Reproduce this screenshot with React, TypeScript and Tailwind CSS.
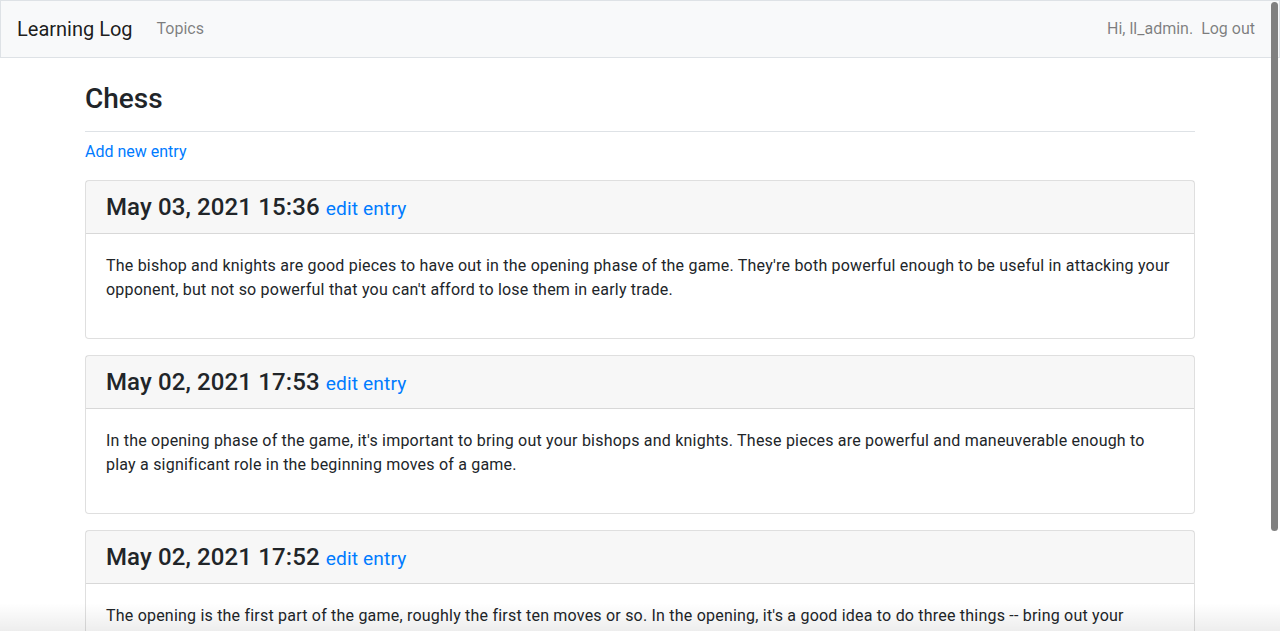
import React from 'react';

type Entry = { date: string; text: string };

const ENTRIES: Entry[] = [
  {
    date: 'May 03, 2021 15:36',
    text: "The bishop and knights are good pieces to have out in the opening phase of the game. They're both powerful enough to be useful in attacking your opponent, but not so powerful that you can't afford to lose them in early trade.",
  },
  {
    date: 'May 02, 2021 17:53',
    text: "In the opening phase of the game, it's important to bring out your bishops and knights. These pieces are powerful and maneuverable enough to play a significant role in the beginning moves of a game.",
  },
  {
    date: 'May 02, 2021 17:52',
    text: "The opening is the first part of the game, roughly the first ten moves or so. In the opening, it's a good idea to do three things -- bring out your bishops and knights, try to control the center of the board, and castle your king.",
  },
];

const EntryCard = ({ entry }: { entry: Entry }) => (
  <div className="mb-4 rounded border border-[rgba(0,0,0,0.125)] bg-white">
    <h4 className="border-b border-[rgba(0,0,0,0.125)] bg-[rgba(0,0,0,0.03)] px-5 py-3 text-[24px] font-medium leading-[28px] tracking-[0.005em] text-[#212529]">
      {entry.date}{' '}
      <small className="text-[80%] font-normal leading-none">
        <a href="#" className="text-[#007bff]">edit entry</a>
      </small>
    </h4>
    <div className="p-5">
      <p className="mb-4 tracking-[0.013em]">{entry.text}</p>
    </div>
  </div>
);

export default function App() {
  return (
    <div className="relative h-[631px] overflow-hidden bg-white font-['Roboto',sans-serif] text-[16px] leading-[1.5] text-[#212529]">
      {/* Navbar */}
      <nav className="mb-6 flex items-center border border-[#dee2e6] bg-[#f8f9fa] px-4 py-2">
        <a href="#" className="mr-4 py-[5px] text-[20px] text-[rgba(0,0,0,0.9)]">Learning Log</a>
        <a href="#" className="px-2 py-2 text-[rgba(0,0,0,0.5)]">Topics</a>
        <div className="ml-auto flex items-center">
          <span className="py-2 text-[rgba(0,0,0,0.5)]">Hi, ll_admin.</span>
          <a href="#" className="px-2 py-2 text-[rgba(0,0,0,0.5)]">Log out</a>
        </div>
      </nav>

      <main className="mx-auto w-[1140px] px-[15px]">
        <div className="mb-2 border-b border-[#dee2e6] pb-2">
          <h3 className="mb-2 text-[28px] font-medium leading-[33px]">Chess</h3>
        </div>
        <p className="mb-4">
          <a href="#" className="text-[#007bff]">Add new entry</a>
        </p>
        {ENTRIES.map((e) => (
          <EntryCard key={e.date} entry={e} />
        ))}
      </main>

      {/* overlay scrollbar thumb */}
      <div className="absolute right-[2px] top-[2px] h-[529px] w-[7px] rounded-full bg-[#808080]" />
      {/* window bottom shadow */}
      <div className="pointer-events-none absolute inset-x-0 bottom-0 h-[28px] bg-gradient-to-b from-transparent to-[rgba(0,0,0,0.07)]" />
    </div>
  );
}
